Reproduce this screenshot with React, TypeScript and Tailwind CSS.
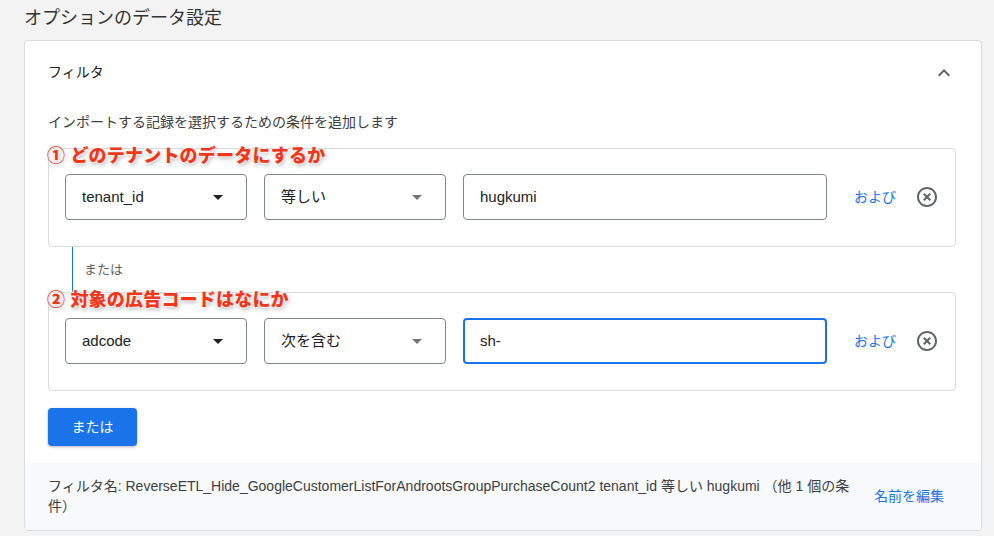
import React from "react";

const font = { fontFamily: '"Liberation Sans", "Noto Sans CJK JP", sans-serif' };

function Caret({ gray }: { gray?: boolean }) {
  return (
    <svg width="10" height="5" viewBox="0 0 10 5" className="shrink-0">
      <path d="M0 0h10L5 5z" fill={gray ? "#757575" : "#202124"} />
    </svg>
  );
}

function SelectBox({ label, gray }: { label: string; gray?: boolean }) {
  return (
    <div className="flex h-[46px] w-[182px] shrink-0 items-center justify-between rounded-[4px] border border-[#80868b] pl-4 pr-[23px] text-[15px] text-[#202124]">
      <span>{label}</span>
      <Caret gray={gray} />
    </div>
  );
}

function RemoveIcon() {
  return (
    <svg width="24" height="24" viewBox="0 0 24 24">
      <path
        fill="#5f6368"
        d="M14.59 8L12 10.59 9.41 8 8 9.41 10.59 12 8 14.59 9.41 16 12 13.41 14.59 16 16 14.59 13.41 12 16 9.41 14.59 8zM12 2C6.47 2 2 6.47 2 12s4.47 10 10 10 10-4.47 10-10S17.53 2 12 2zm0 18c-4.41 0-8-3.59-8-8s3.59-8 8-8 8 3.59 8 8-3.59 8-8 8z"
      />
    </svg>
  );
}

function ConditionBox({
  note,
  field,
  op,
  value,
  focused,
}: {
  note: string;
  field: string;
  op: string;
  value: string;
  focused?: boolean;
}) {
  return (
    <div className="relative rounded-[4px] border border-[#dadce0] px-4 pt-[25px] pb-[26px]">
      {/* annotation */}
      <div className="absolute left-[-2px] top-[-4px] whitespace-nowrap text-[18px] font-black leading-[22px] tracking-[0.2px] text-[#f2361c] [text-shadow:0_0_1px_#fff,0_0_2px_#fff,0_0_3px_#fff,1px_2px_4px_rgba(0,0,0,0.35)]">
        {note}
      </div>
      <div className="flex items-center">
        <SelectBox label={field} />
        <div className="ml-[17px]">
          <SelectBox label={op} gray />
        </div>
        <div
          className={`ml-[17px] flex h-[46px] w-[364px] shrink-0 items-center rounded-[4px] text-[15px] text-[#202124] ${
            focused ? "border-2 border-[#1a73e8] pl-[15px]" : "border border-[#80868b] pl-4"
          }`}
        >
          {value}
        </div>
        <span className="ml-[27px] shrink-0 whitespace-nowrap text-[14px] text-[#1a73e8]">および</span>
        <div className="ml-[19px] flex shrink-0">
          <RemoveIcon />
        </div>
      </div>
    </div>
  );
}

export default function App() {
  return (
    <div className="min-h-[536px] w-[994px] bg-[#f3f3f3] pl-6 pr-3" style={font}>
      <h2 className="pt-[6px] text-[18px] leading-[24px] text-[#333]">オプションのデータ設定</h2>

      <div className="mt-[10px] overflow-hidden rounded-[4px] border border-[#dadce0] bg-white">
        {/* header */}
        <div className="flex h-[63px] items-center justify-between pl-[23px] pr-[25px]">
          <span className="text-[14px] text-[#202124]">フィルタ</span>
          <svg width="24" height="24" viewBox="0 0 24 24">
            <path fill="#5f6368" d="M7.41 15.41L12 10.83l4.59 4.58L18 14l-6-6-6 6z" />
          </svg>
        </div>

        <div className="pl-[23px] pr-[25px]">
          <p className="pt-[8px] text-[14px] leading-[20px] text-[#3c4043]">
            インポートする記録を選択するための条件を追加します
          </p>

          <div className="mt-[16px]">
            <ConditionBox
              note="① どのテナントのデータにするか"
              field="tenant_id"
              op="等しい"
              value="hugkumi"
            />

            <div className="flex h-[45px]">
              <div className="ml-6 w-px bg-[#1a73e8]" />
              <div className="flex items-center pl-[11px]">
                <span className="text-[13px] text-[#5f6368]">または</span>
              </div>
            </div>

            <ConditionBox
              note="② 対象の広告コードはなにか"
              field="adcode"
              op="次を含む"
              value="sh-"
              focused
            />
          </div>

          <button className="mt-[17px] mb-[17px] h-[38px] w-[89px] rounded-[4px] bg-[#1a73e8] text-[14px] text-white shadow-[0_1px_3px_rgba(0,0,0,0.3)]">
            または
          </button>
        </div>

        {/* footer */}
        <div className="flex items-center bg-[#f8f9fa] pl-[23px] pr-[37px] pt-[13px] pb-[14px]">
          <p className="w-[812px] text-[14px] leading-[20px] text-[#3c4043]">
            フィルタ名: ReverseETL_Hide_GoogleCustomerListForAndrootsGroupPurchaseCount2 tenant_id 等しい hugkumi （他 1 個の条件）
          </p>
          <span className="ml-auto text-[14px] text-[#1a73e8]">名前を編集</span>
        </div>
      </div>
    </div>
  );
}
